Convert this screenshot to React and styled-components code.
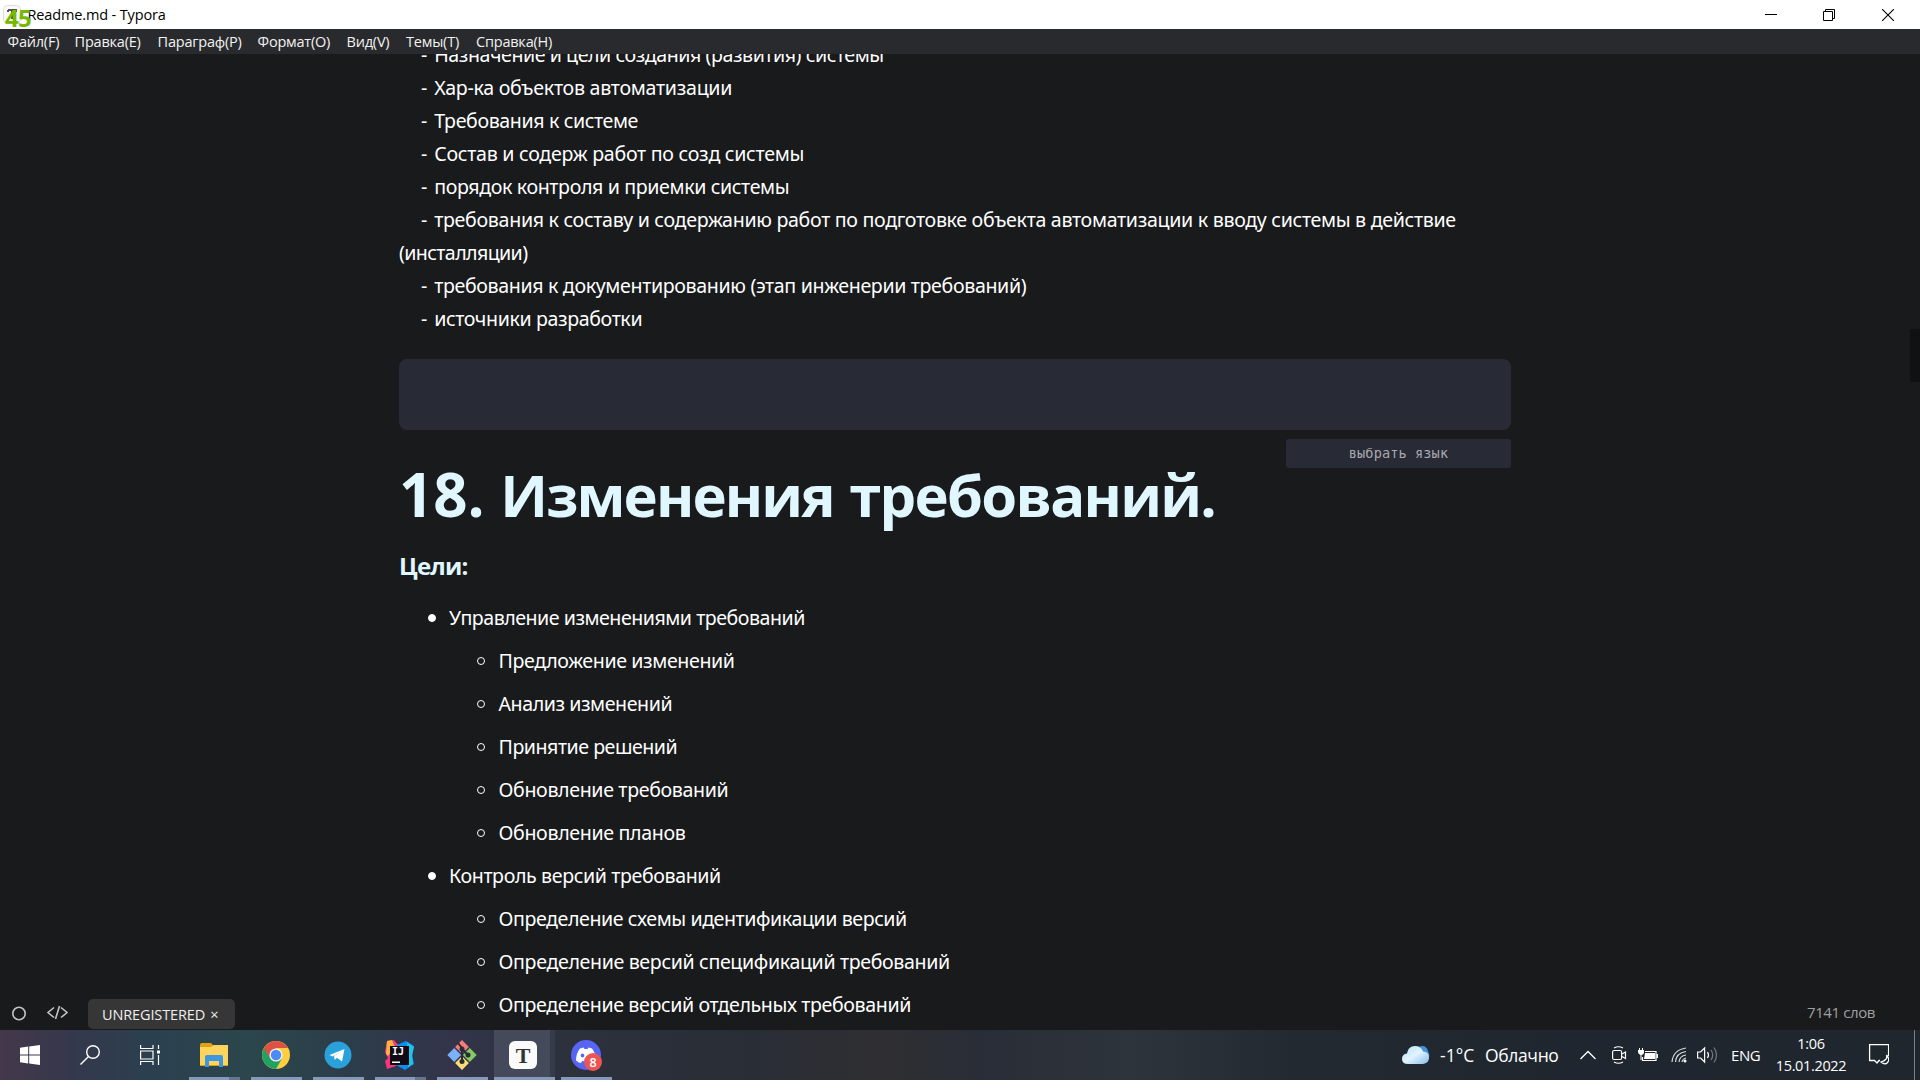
import React from "react";
import styled, { createGlobalStyle } from "styled-components";

const ui = `"Open Sans", "Noto Sans", sans-serif`;
const doc = `"Noto Sans", "Open Sans", sans-serif`;

const Global = createGlobalStyle`
  * { box-sizing: border-box; }
  html, body { margin: 0; padding: 0; overflow: hidden; background: #191a1c; }
`;

const Screen = styled.div`
  width: 1920px;
  height: 1080px;
  display: flex;
  flex-direction: column;
  overflow: hidden;
  background: #191a1c;
  color: #fff;
  font-family: ${ui};
`;

const TitleBar = styled.header`
  position: relative;
  flex: 0 0 29px;
  display: flex;
  align-items: center;
  justify-content: space-between;
  background: #fff;
  color: #000;
`;
const WindowName = styled.div`
  display: flex;
  align-items: center;
  gap: 6.5px;
  padding-left: 3px;
  font-size: 14.5px;
  letter-spacing: -0.14px;
  line-height: 28px;
`;
const FpsCounter = styled.span`
  position: absolute;
  left: 5px;
  top: 4px;
  font: 700 24px/28px ${ui};
  letter-spacing: -0.6px;
  color: #76b900;
`;
const WindowButtons = styled.div`
  display: flex;
  padding-right: 3px;
`;
const WindowButton = styled.div`
  width: 58.5px;
  height: 29px;
  display: grid;
  place-items: center;
`;

const MenuBar = styled.nav`
  flex: 0 0 25px;
  display: flex;
  align-items: center;
  gap: 16px;
  padding-left: 7.6px;
  background: #292a2d;
  font-size: 14.5px;
  line-height: 24px;
  letter-spacing: -0.22px;
  color: #f2f2f2;
`;
const MenuItem = styled.span`
  width: ${(p) => p.$w}px;
  white-space: pre;
`;

const Workspace = styled.main`
  position: relative;
  flex: 1;
  min-height: 0;
  overflow: hidden;
  padding: 0 409px 0 399px;
  font-family: ${doc};
  font-size: 19.6px;
`;
const Scroll = styled.div`
  position: absolute;
  right: 0;
  top: 275px;
  width: 10px;
  height: 53px;
  background: #111113;
`;
const Paragraph = styled.div`
  margin-top: -16px;
  line-height: 33px;
`;
const Line = styled.div`
  display: flex;
  white-space: pre;
  padding-left: ${(p) => (p.$wrap ? 0 : 22)}px;
  letter-spacing: ${(p) => p.$ls}px;
`;
const Dash = styled.span`
  flex: 0 0 13.2px;
  letter-spacing: 0;
`;
const CodeFence = styled.div`
  height: 71px;
  margin-top: 24px;
  border-radius: 8px;
  background: #282a36;
`;
const Language = styled.div`
  width: 225px;
  height: 29px;
  margin: 9px 0 0 auto;
  border-radius: 3px;
  background: #282a36;
  color: #a8a9ae;
  text-align: center;
  font: 13.6px/29px "DejaVu Sans Mono", "Liberation Mono", monospace;
  letter-spacing: 0.1px;
`;
const H1 = styled.h1`
  margin: -16px 0 0;
  font: 700 60px/84px ${ui};
  color: #e1f7ff;
  white-space: nowrap;
`;
const HeadingWord = styled.span`
  font-size: 58px;
  letter-spacing: ${(p) => p.$ls}px;
`;
const H4 = styled.h4`
  margin: 12px 0 0;
  font: 700 24px/34px ${ui};
  letter-spacing: -0.8px;
  color: #e1f7ff;
`;
const List = styled.ul`
  margin: 13px 0 0;
  padding: 0;
  list-style: none;
`;
const Item = styled.li`
  display: flex;
  align-items: center;
  height: 43px;
  padding-left: ${(p) => (p.$deep ? 78 : 28.5)}px;
  gap: 13.5px;
  white-space: nowrap;
  letter-spacing: ${(p) => p.$ls}px;
`;
const Bullet = styled.i`
  flex: none;
  width: 8px;
  height: 8px;
  border-radius: 50%;
  border: 1px solid #fff;
  background: ${(p) => (p.$deep ? "transparent" : "#fff")};
`;

const Status = styled.footer`
  position: absolute;
  left: 0;
  right: 0;
  bottom: 0;
  height: 31px;
  display: flex;
  align-items: flex-start;
  padding: 0 45px 0 11px;
  font-family: ${ui};
  svg { margin-top: 3.5px; }
`;
const Unregistered = styled.div`
  display: flex;
  align-items: center;
  gap: 5px;
  width: 147px;
  height: 30px;
  padding-left: 14px;
  margin-left: 17px;
  border-radius: 5px;
  background: #363636;
  color: #eee;
  font-size: 14.5px;
  letter-spacing: -0.12px;
`;
const Words = styled.div`
  margin-left: auto;
  font-size: 15px;
  line-height: 26px;
  letter-spacing: -0.4px;
  color: #a0a0a1;
`;

const Taskbar = styled.div`
  flex: 0 0 50px;
  display: flex;
  background: linear-gradient(90deg, #44384a 0, #35384c 70px, #2b404f 150px, #2b464c 250px, #2c3d4a 350px, #33344a 450px, #2c313c 570px, #292d36 750px, #2f2f32 880px, #292d37 980px, #2e343b 1130px, #232930 1300px, #1f262f 1600px, #20262e 1920px);
`;
const TaskButton = styled.div`
  position: relative;
  width: ${(p) => p.$w || 62}px;
  height: 50px;
  display: grid;
  place-items: center;
  &::before {
    content: "";
    position: absolute;
    inset: 0 6px 0 0;
    background: ${(p) => (p.$active ? "linear-gradient(90deg, #444a59 56px, #353b48 56px)" : "none")};
  }
  &::after {
    content: "";
    position: absolute;
    left: 0;
    bottom: 0;
    width: ${(p) => (p.$active ? 61 : 51)}px;
    height: 3px;
    background: ${(p) => (p.$stack ? "linear-gradient(90deg, #8699b9 40px, #66758d 40px)" : "#8699b9")};
  }
  svg { position: relative; margin-right: ${(p) => p.$shift ?? 12}px; }
`;
const Start = styled.div`
  display: flex;
  width: 189px;
`;
const StartButton = styled.div`
  width: 60px;
  height: 50px;
  display: grid;
  place-items: center;
`;
const Tray = styled.div`
  margin-left: auto;
  display: flex;
  align-items: center;
  height: 50px;
`;
const Cell = styled.div`
  flex: none;
  width: ${(p) => p.$w}px;
  display: flex;
  font-size: ${(p) => p.$size || 15}px;
  letter-spacing: ${(p) => p.$ls || 0}px;
  white-space: pre;
`;
const Clock = styled.div`
  width: 92px;
  text-align: center;
  font-size: 14.5px;
  line-height: 22px;
  letter-spacing: -0.35px;
`;
const Desktop = styled.div`
  width: 6px;
  height: 50px;
  border-left: 1px solid #7b7f85;
`;

const paragraph = [
  ["Назначение и цели создания (развития) системы", -0.44],
  ["Хар-ка объектов автоматизации", -0.27],
  ["Требования к системе", -0.38],
  ["Состав и содерж работ по созд системы", -0.27],
  ["порядок контроля и приемки системы", -0.37],
  ["требования к составу и содержанию работ по подготовке объекта автоматизации к вводу системы в действие", -0.305],
  ["(инсталляции)", -0.6, true],
  ["требования к документированию (этап инженерии требований)", -0.35],
  ["источники разработки", -0.38],
];
const list = [
  ["Управление изменениями требований", -0.48],
  ["Предложение изменений", -0.38, true],
  ["Анализ изменений", -0.43, true],
  ["Принятие решений", -0.48, true],
  ["Обновление требований", -0.35, true],
  ["Обновление планов", -0.34, true],
  ["Контроль версий требований", -0.38],
  ["Определение схемы идентификации версий", -0.42, true],
  ["Определение версий спецификаций требований", -0.35, true],
  ["Определение версий отдельных требований", -0.38, true],
];
const menu = [["Файл(F)", 51], ["Правка(E)", 67], ["Параграф(P)", 84], ["Формат(O)", 73], ["Вид(V)", 43.5], ["Темы(T)", 54], ["Справка(H)", 77]];

export default function App() {
  return (
    <Screen>
      <Global />
      <TitleBar>
        <WindowName>
          <svg width="18" height="19" viewBox="0 0 18 19">
            <rect x="0.5" y="0.5" width="17" height="18" rx="4" fill="#fafafa" stroke="#ddd" />
            <path d="M5 5h8v2M9 5v9M5 5v2" stroke="#555" strokeWidth="2" fill="none" />
          </svg>
          <span>Readme.md - Typora</span>
        </WindowName>
        <FpsCounter>45</FpsCounter>
        <WindowButtons>
          <WindowButton><svg width="12" height="12"><path d="M0 5.5h12" stroke="#000" /></svg></WindowButton>
          <WindowButton><svg width="12" height="12" fill="none" stroke="#000"><path d="M.5 2.5h9v9h-9zM2.5 2.5v-2h9v9h-2" /></svg></WindowButton>
          <WindowButton><svg width="12" height="12"><path d="M0 0l12 12M12 0L0 12" stroke="#000" strokeWidth="1.1" /></svg></WindowButton>
        </WindowButtons>
      </TitleBar>
      <MenuBar>
        {menu.map(([t, w]) => <MenuItem key={t} $w={w}>{t}</MenuItem>)}
      </MenuBar>
      <Workspace>
        <Paragraph>
          {paragraph.map(([t, ls, wrap]) => (
            <Line key={t} $wrap={wrap} $ls={ls}>
              {!wrap && <Dash>-</Dash>}
              <span>{t}</span>
            </Line>
          ))}
        </Paragraph>
        <CodeFence />
        <Language>выбрать язык</Language>
        <H1>18. <HeadingWord $ls={-1.9}>Изменения</HeadingWord> <HeadingWord $ls={-1.75}>требований.</HeadingWord></H1>
        <H4>Цели:</H4>
        <List>
          {list.map(([t, ls, deep]) => (
            <Item key={t} $deep={deep} $ls={ls}><Bullet $deep={deep} />{t}</Item>
          ))}
        </List>
        <Scroll />
        <Status>
          <svg width="60" height="20" fill="none" stroke="#c4c4c5" strokeWidth="1.6">
            <circle cx="8" cy="10.500" r="6.200" />
            <path d="M43 4.500l-6 5 6 5M50 4.500l6 5-6 5M48.500 3l-4 13" />
          </svg>
          <Unregistered><span>UNREGISTERED</span><span>×</span></Unregistered>
          <Words>7141 слов</Words>
        </Status>
      </Workspace>
      <Taskbar>
        <Start>
          <StartButton><svg width="20" height="20" fill="#fff"><path d="M0 2.800l8.200-1.200v8H0zM9.200 1.500L20 0v9.600H9.200zM0 10.500h8.200v8L0 17.300zM9.200 10.500H20V20L9.200 18.600z" /></svg></StartButton>
          <StartButton><svg width="20" height="20" fill="none" stroke="#fff" strokeWidth="1.4"><circle cx="13" cy="7" r="6.300" /><path d="M8.500 11.500L.5 19.500" /></svg></StartButton>
          <StartButton><svg width="20" height="20" fill="none" stroke="#fff" strokeWidth="1.2"><path d="M.6 0v3.500h12.400V0M.6 20v-3.500h12.400V20M.6 6h12.400v8H.6zM18.500 0v4M18.500 10v10" /><path d="M17 5.500h3v3h-3z" fill="#fff" stroke="none" /></svg></StartButton>
        </Start>
        <TaskButton $stack>
          <svg width="28" height="24"><path d="M0 2q0-2 2-2h9l3 3H28v20H0z" fill="#e0a10d" /><path d="M0 4h11l3-2h14v20H0z" fill="#ffd35c" /><path d="M5 24V14q0-2 2-2h14q2 0 2 2v10h-4v-6H9v6z" fill="#3c96e0" /></svg>
        </TaskButton>
        <TaskButton>
          <svg width="28" height="28" viewBox="-14 -14 28 28"><circle r="14" fill="#ffcd41" /><path d="M0 0L-12.100-7A14 14 0 0 0 0 14L6 3.500z" fill="#1ea362" /><path d="M-12.100-7A14 14 0 0 1 12.100-7H0L-6 3.500z" fill="#dd5144" /><circle r="6.600" fill="#f1f1f1" /><circle r="5.200" fill="#4c8bf5" /></svg>
        </TaskButton>
        <TaskButton>
          <svg width="28" height="28"><circle cx="14" cy="14" r="13.500" fill="#2aa1da" /><path d="M5.500 14L20.500 8l-2.500 12.500-5-3.700-2.300 2.200-.7-4L17.500 10.500l-9 5z" fill="#fff" /></svg>
        </TaskButton>
        <TaskButton $stack>
          <svg width="30" height="30"><path d="M2 1l7-1 5 6-3 20-9 3-2-8 3-3-3-6z" fill="#f9357e" /><path d="M2 1l5-1 3 7-7 9-2-2z" fill="#ffb13d" /><path d="M12 5L21 1l8 5-2 8 2 10-9 6-9-5z" fill="#0c8ff0" /><path d="M22 2l7 5-2 9 1 8-5 3z" fill="#20c4e8" /><path d="M5 6h19v19H5z" fill="#120b15" /><path d="M7 21.500h8v1.500H7z" fill="#fff" /><text x="7" y="15" fill="#fff" fontSize="10" fontWeight="700" fontFamily="DejaVu Sans Mono">IJ</text></svg>
        </TaskButton>
        <TaskButton $w={57} $shift={7}>
          <svg width="30" height="30"><path d="M15 0l6.900 6.900-6.900 6.900-6.900-6.900z" fill="#f57c7c" /><path d="M7.200 8.100l6.900 6.900-6.900 6.900L.3 15z" fill="#7cb0fa" /><path d="M22.800 8.100l6.900 6.900-6.900 6.900-6.900-6.900z" fill="#84cc60" /><path d="M15 16.200l6.900 6.900L15 30l-6.900-6.900z" fill="#fbdd74" /><path d="M11 3l4 5v14M15 9l6 6" stroke="#282c34" strokeWidth="2" fill="none" /><g fill="#282c34"><circle cx="15" cy="9" r="2.500" /><circle cx="15" cy="21.500" r="2.500" /><circle cx="21" cy="15" r="2.500" /></g></svg>
        </TaskButton>
        <TaskButton $active $w={67} $shift={9}>
          <svg width="28" height="28"><rect width="28" height="28" rx="6" fill="#fafafa" /><text x="14" y="21.500" textAnchor="middle" fontFamily="Liberation Serif" fontWeight="700" fontSize="22" fill="#333">T</text></svg>
        </TaskButton>
        <TaskButton>
          <svg width="31" height="31"><circle cx="15" cy="15" r="15" fill="#5865f2" /><path d="M9 8.500l3.500-1 1 1.500h3l1-1.500 3.500 1q4 5 4 12-3 2.500-5 2.500l-1-2q-4 .7-8 0l-1 2q-2 0-5-2.500 0-7 4-12" fill="#fff" /><ellipse cx="11.500" cy="15.500" rx="1.800" ry="2" fill="#5865f2" /><circle cx="22" cy="22" r="9" fill="#ed5555" /><text x="22" y="26.500" textAnchor="middle" fontFamily="Open Sans" fontWeight="600" fontSize="12.500" fill="#fff">8</text></svg>
        </TaskButton>
        <Tray>
          <Cell $w={38}><svg width="28" height="20"><defs><linearGradient id="cl" x1="0" y1="0" x2="1" y2="1"><stop offset="0" stopColor="#b9e2fb" /><stop offset=".5" stopColor="#e2f3fd" /><stop offset="1" stopColor="#83bdec" /></linearGradient></defs><path d="M16 2q8-3 10 4 3 6-1 11l-7 1z" fill="#4392dc" /><path d="M6 19q-6 0-6-5 0-5 5-5.500Q6 1 13 1q6 0 8 5.500 6 .5 6 6T21 19z" fill="url(#cl)" /></svg></Cell>
          <Cell $w={45} $size={17.5}>-1°C</Cell>
          <Cell $w={95} $size={17.5} $ls={-0.35}>Облачно</Cell>
          <Cell $w={32}><svg width="16" height="10" fill="none" stroke="#fff" strokeWidth="1.300"><path d="M.5 9L8 1.500 15.500 9" /></svg></Cell>
          <Cell $w={26}><svg width="15" height="18" fill="none" stroke="#fff" strokeWidth="1.200"><rect x=".6" y="4.500" width="9" height="9" rx="1.500" /><path d="M10 8l3.500-2v6.500L10 10.500M2 2q4.500-2.500 9 0M2 16q4.500 2.500 9 0" /></svg></Cell>
          <Cell $w={33}><svg width="20" height="14"><path d="M7 3.500h11v9H4.500V9" fill="none" stroke="#fff" strokeWidth="1.200" /><path d="M7 5h10v6H6zM18.500 6h1.500v4h-1.500zM0 2h6v3q-1 2-2.500 2v5h-1V7Q0 6 0 4zM1 0h1v2H1zM4 0h1v2H4z" fill="#fff" /></svg></Cell>
          <Cell $w={26}><svg width="17" height="16" fill="none" stroke="#d5d7da" strokeWidth="1.200"><path d="M1 15Q2 3 15 1M4.500 15Q5 6 15 4.500M8 15q.5-6 7-7M11 15q.5-3 4-4" /><circle cx="14" cy="14" r="1.500" fill="#fff" stroke="none" /></svg></Cell>
          <Cell $w={34}><svg width="21" height="18" fill="none" stroke="#fff" strokeWidth="1.200"><path d="M.6 6h3l4-4v14l-4-4h-3zM10.500 6q2 3 0 6" /><path d="M14 4q3.500 5 0 10M17 1.500q5 7.500 0 15" stroke="#777c82" /></svg></Cell>
          <Cell $w={34} $ls={-0.4}>ENG</Cell>
          <Clock><div>1:06</div><div>15.01.2022</div></Clock>
          <Cell $w={57}><svg width="32" height="22" viewBox="-12 0 32 22" fill="none" stroke="#fff" strokeWidth="1.300"><path d="M11 16.500h-1l-2 2.500-2.500-2.500H.6V.6h19V12" /><path d="M17.500 11q1.500 5-5.500 7 5 4 7.500-1 .8-3-2-6" /></svg></Cell>
          <Desktop />
        </Tray>
      </Taskbar>
    </Screen>
  );
}
